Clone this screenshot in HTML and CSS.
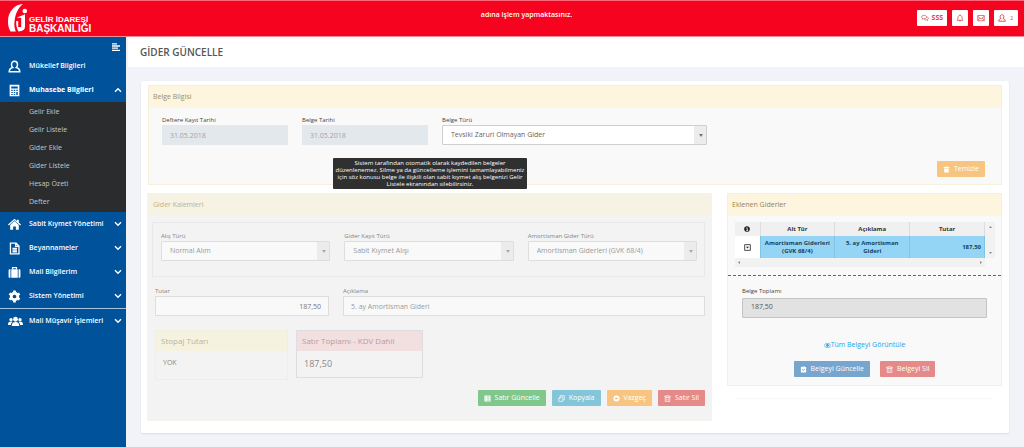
FILE: index.html
```html
<!DOCTYPE html>
<html lang="tr">
<head>
<meta charset="utf-8">
<title>Gider Güncelle</title>
<link rel="stylesheet" href="styles.css">
</head>
<body>
<svg class="defs" aria-hidden="true">
  <symbol id="user" viewBox="0 0 16 16"><path d="M8 1.500c2.300 0 3.700 1.700 3.700 4 0 1.600-.7 3-1.500 3.700 2.800.6 4.300 1.800 4.300 5.300h-13c0-3.500 1.500-4.700 4.300-5.300C5 8.500 4.300 7.100 4.300 5.500c0-2.300 1.400-4 3.700-4z" fill="none" stroke="currentColor" stroke-width="1.800"/></symbol>
  <symbol id="down" viewBox="0 0 8 6"><path d="M1 1.200l3 3 3-3" fill="none" stroke="currentColor" stroke-width="1.400"/></symbol>
  <symbol id="trash" viewBox="0 0 16 16"><path d="M1.500 4.500V2.500h4L6.500 1h3l1 1.500h4v2zM2.800 5.500h10.400V15H2.800zM6.300 8v5M9.700 8v5" fill="none" stroke="currentColor" stroke-width="1.500"/></symbol>
  <symbol id="trashfull" viewBox="0 0 16 16"><path d="M1.500 4.500v-2h4L6 1h4l.5 1.500h4v2zM2.500 5.500h11L13 15H3z" fill="currentColor"/></symbol>
</svg>
<header class="top">
  <a class="brand" href="#">
    <svg class="mark" viewBox="0 0 20 28"><path d="M15 0C6 .5 0 8 0 17.500c0 4 .8 7.300 2.500 10h5.300C6.300 24 6 20.500 6.600 16.500 7.500 9.500 10 4 15 0z" fill="#fff"/><path d="M9 13.500l8-3.200v12.200c0 3-2 4.800-6.500 5-1.700-2.800-2.500-6.500-2.300-10.500h2v6h3v-9.300H9z" fill="#fff"/><circle cx="16.800" cy="7" r="2.300" fill="#fff"/></svg>
    <span class="brand-name"><span>GELİR İDARESİ</span><span class="wide">BAŞKANLIĞI</span></span>
  </a>
  <p class="notice">adına işlem yapmaktasınız.</p>
  <nav class="tools" aria-label="Hesap">
    <button type="button"><svg class="ic8" viewBox="0 0 18 16"><path d="M7 2C3.700 2 1.500 3.600 1.500 5.800c0 1.300.8 2.400 2 3.100L2.800 11l2.700-1.300c4 .5 7-1.200 7-3.900C12.500 3.600 10.300 2 7 2zM14 5.500c1.700.6 2.600 1.700 2.600 3 0 1.200-.7 2.200-1.900 2.900l.7 2.100-2.600-1.300c-2.300.3-4.300-.2-5.500-1.500" fill="none" stroke="currentColor" stroke-width="1.500"/></svg><b>SSS</b></button>
    <button type="button" aria-label="Bildirimler"><svg class="ic8" viewBox="0 0 16 16"><path d="M8 1v1.500M2 12.500c1.800-1.600 2-3.500 2-5.500 0-2.700 1.700-4.300 4-4.300S12 4.300 12 7c0 2 .2 3.900 2 5.500zM6.500 13c0 2.200 3 2.200 3 0" fill="none" stroke="currentColor" stroke-width="1.500"/></svg></button>
    <button type="button" aria-label="Mesajlar"><svg class="ic8" viewBox="0 0 16 16"><path d="M1.500 3h13v10.500h-13zM1.500 5L8 9.500 14.500 5M1.500 12.500l4.500-4M14.500 12.500L10 8.500" fill="none" stroke="currentColor" stroke-width="1.400"/></svg></button>
    <button type="button"><svg class="ic8"><use href="#user"/></svg><span class="count">2</span></button>
  </nav>
</header>
<div class="shell">
  <aside class="side">
    <button class="toggle" type="button" aria-label="Menü"><svg viewBox="0 0 8 8"><path d="M0 .8h5M0 3h8M0 5.200h6M0 7.300h8" stroke="#fff" stroke-width="1.300"/></svg></button>
    <nav aria-label="Menü">
      <a class="item" href="#"><svg class="ic"><use href="#user"/></svg><span>Mükellef Bilgileri</span></a>
      <a class="item open" href="#"><svg class="ic" viewBox="0 0 16 16"><path fill-rule="evenodd" d="M2 1h12v14H2zM4 3v2.500h8V3zM4 7v1.700h1.800V7zM7.100 7v1.700h1.800V7zM10.200 7v1.700H12V7zM4 9.800v1.400h1.800V9.800zM7.100 9.800v1.400h1.800V9.800zM4 12.200v1.400h1.800v-1.400zM7.100 12.200v1.400h1.800v-1.400zM10.200 9.800v3.800H12V9.800z" fill="currentColor"/></svg><span>Muhasebe Bilgileri</span><svg class="chev up"><use href="#down"/></svg></a>
      <div class="sub">
        <a href="#">Gelir Ekle</a><a href="#">Gelir Listele</a><a href="#">Gider Ekle</a><a href="#">Gider Listele</a><a href="#">Hesap Özeti</a><a href="#">Defter</a>
      </div>
      <a class="item" href="#"><svg class="ic" viewBox="0 0 16 16"><path d="M8 3.800l5.300 4.800V14.500H9.700v-4H6.300v4H2.700V8.600zM0 8l8-7 3 2.600V2h2.300v3.600L16 8l-1 1.100-7-6.200-7 6.200z" fill="currentColor"/></svg><span>Sabit Kıymet Yönetimi</span><svg class="chev"><use href="#down"/></svg></a>
      <a class="item" href="#"><svg class="ic" viewBox="0 0 16 16"><path d="M3 1.500h7l3.500 3.500v9.500H3zM9.500 1.500V5.500h4M5.500 8h5.500M5.500 10h5.500M5.500 12h5.500" fill="none" stroke="currentColor" stroke-width="1.600"/></svg><span>Beyannameler</span><svg class="chev"><use href="#down"/></svg></a>
      <a class="item" href="#"><svg class="ic" viewBox="0 0 16 16"><path d="M5.500 4V2h5v2" fill="none" stroke="currentColor" stroke-width="1.400"/><path d="M4 4h8v10.500H4zM3 4v10.500H2.200C1.300 14.500.7 14 .7 13V5.500C.7 4.500 1.300 4 2.200 4zM13 4v10.500h.8c.9 0 1.500-.5 1.500-1.500V5.500c0-1-.6-1.500-1.500-1.500z" fill="currentColor"/></svg><span>Mali Bilgilerim</span><svg class="chev"><use href="#down"/></svg></a>
      <a class="item" href="#"><svg class="ic" viewBox="0 0 16 16"><circle cx="8" cy="8" r="4" fill="none" stroke="currentColor" stroke-width="3.400"/><path d="M8 .7v3M8 12.300v3M1.700 4.400l2.600 1.500M11.700 10.100l2.600 1.500M1.700 11.600l2.600-1.500M11.700 5.900l2.600-1.500" stroke="currentColor" stroke-width="3.400"/></svg><span>Sistem Yönetimi</span><svg class="chev"><use href="#down"/></svg></a>
      <a class="item ruled" href="#"><svg class="ic wide-ic" viewBox="0 0 20 14"><circle cx="10" cy="4" r="3.200"/><circle cx="4" cy="4.500" r="2.200"/><circle cx="16" cy="4.500" r="2.200"/><path d="M5 13c0-4 1.500-5.500 5-5.500s5 1.500 5 5.500zM0 11.500c0-3 .8-4.500 4.500-4.500L6 7.500C4.300 8.500 4 10 4 11.500zM20 11.500c0-3-.8-4.500-4.500-4.500L14 7.500c1.700 1 2 2.500 2 4z"/></svg><span>Mali Müşavir İşlemleri</span><svg class="chev"><use href="#down"/></svg></a>
    </nav>
  </aside>
  <main class="main">
    <h1>GİDER GÜNCELLE</h1>
    <div class="page">
      <section class="panel doc">
        <h2>Belge Bilgisi</h2>
        <div class="doc-body">
          <div class="doc-fields">
            <div class="field"><label for="kayit">Deftere Kayıt Tarihi</label><input id="kayit" class="date" type="text" value="31.05.2018" disabled></div>
            <div class="field"><label for="tarih">Belge Tarihi</label><input id="tarih" class="date" type="text" value="31.05.2018" disabled></div>
            <div class="field"><label for="tur">Belge Türü</label><div class="pick"><select id="tur"><option>Tevsiki Zaruri Olmayan Gider</option></select></div></div>
          </div>
          <div class="doc-actions"><button class="btn orange" type="button"><svg><use href="#trashfull"/></svg>Temizle</button></div>
        </div>
        <div class="tip" role="tooltip">Sistem tarafından otomatik olarak kaydedilen belgeler<br>düzenlenemez. Silme ya da güncelleme işlemini tamamlayabilmeniz<br>için söz konusu belge ile ilişkili olan sabit kıymet alış belgenizi Gelir<br>Listele ekranından silebilirsiniz.</div>
      </section>
      <div class="cols">
        <section class="lines">
          <h2>Gider Kalemleri</h2>
          <div class="lines-body">
            <div class="kinds">
              <div class="field"><label for="alis">Alış Türü</label><div class="pick"><select id="alis" disabled><option>Normal Alım</option></select></div></div>
              <div class="field"><label for="gkt">Gider Kayıt Türü</label><div class="pick"><select id="gkt" disabled><option>Sabit Kıymet Alışı</option></select></div></div>
              <div class="field"><label for="agt">Amortisman Gider Türü</label><div class="pick"><select id="agt" disabled><option>Amortisman Giderleri (GVK 68/4)</option></select></div></div>
            </div>
            <div class="amounts">
              <div class="field"><label for="tutar">Tutar</label><input id="tutar" class="text num" type="text" value="187,50" readonly></div>
              <div class="field"><label for="acik">Açıklama</label><input id="acik" class="text" type="text" value="5. ay Amortisman Gideri" readonly></div>
            </div>
            <div class="cards">
              <div class="card yellow"><h3>Stopaj Tutarı</h3><p>YOK</p></div>
              <div class="card red"><h3>Satır Toplamı - KDV Dahil</h3><p>187,50</p></div>
            </div>
            <div class="actions">
              <button class="btn green" type="button"><svg viewBox="0 0 16 16"><path fill-rule="evenodd" d="M1 1h14v14H1zM3 3.500V5h2V3.500zM6.500 3.500V5H13V3.500zM3 7.200v1.600h2V7.200zM6.500 7.200v1.600H13V7.200zM3 11v1.500h2V11zM6.500 11v1.500H13V11z" fill="currentColor"/></svg>Satır Güncelle</button>
              <button class="btn cyan" type="button"><svg viewBox="0 0 16 16"><path d="M5 4.500V1.500h9.500v9.500H11M1.500 8L5 4.500h6v10H1.500zM5 4.500V8H1.500" fill="none" stroke="currentColor" stroke-width="1.500"/></svg>Kopyala</button>
              <button class="btn orange" type="button"><svg viewBox="0 0 16 16"><path fill-rule="evenodd" d="M8 1a7 7 0 1 1 0 14A7 7 0 0 1 8 1zM8 4L4 8l4 4V9.200h4V6.800H8z" fill="currentColor"/></svg>Vazgeç</button>
              <button class="btn rose" type="button"><svg><use href="#trash"/></svg>Satır Sil</button>
            </div>
          </div>
        </section>
        <div class="right">
          <section class="panel added">
            <h2>Eklenen Giderler</h2>
            <div class="grid">
              <table>
                <thead><tr><th class="c0"><svg class="info" viewBox="0 0 16 16"><circle cx="8" cy="8" r="7.500" fill="#222"/><path d="M6 7h3v5M6 12.200h5M7 4h2" stroke="#fff" stroke-width="2" fill="none"/></svg></th><th>Alt Tür</th><th>Açıklama</th><th>Tutar</th></tr></thead>
                <tbody><tr><td class="c0"><button class="expand" type="button" aria-label="Aç"><svg viewBox="0 0 16 16"><path d="M1.500 1.500h13v13h-13z" fill="none" stroke="#333" stroke-width="2"/><path d="M4.500 6.500h7L8 10.500z" fill="#222"/></svg></button></td><td>Amortisman Giderleri<br>(GVK 68/4)</td><td>5. ay Amortisman<br>Gideri</td><td class="sum">187,50</td></tr></tbody>
              </table>
              <div class="vbar"><svg viewBox="0 0 6 4"><path d="M0 4l3-4 3 4z"/></svg><svg viewBox="0 0 6 4"><path d="M0 0l3 4 3-4z"/></svg></div>
              <div class="hbar"><svg viewBox="0 0 4 6"><path d="M4 0L0 3l4 3z"/></svg><svg viewBox="0 0 4 6"><path d="M0 0l4 3-4 3z"/></svg></div>
            </div>
            <div class="total">
              <div class="field"><label for="toplam">Belge Toplamı</label><input id="toplam" class="sumbox" type="text" value="187,50" disabled></div>
              <a class="view" href="#"><svg viewBox="0 0 16 10"><path d="M0 5c4-6.500 12-6.500 16 0-4 6.500-12 6.500-16 0z" fill="none" stroke="currentColor" stroke-width="1.600"/><circle cx="8" cy="4.800" r="3.200" fill="currentColor"/></svg>Tüm Belgeyi Görüntüle</a>
              <div class="doc-buttons">
                <button class="btn blue" type="button"><svg viewBox="0 0 16 16"><path fill-rule="evenodd" d="M2 2.500h3.500V1h5v1.500H14V15H2zM4.500 8.500l3 3.200 4.500-4.500-1.100-1.200-3.400 3.400-1.900-2z" fill="currentColor"/></svg>Belgeyi Güncelle</button>
                <button class="btn rose" type="button"><svg><use href="#trash"/></svg>Belgeyi Sil</button>
              </div>
            </div>
          </section>
          <hr>
        </div>
      </div>
    </div>
  </main>
</div>
</body>
</html>
```
FILE: styles.css
```css
* { box-sizing: border-box; }
body { margin: 0; min-height: 100vh; display: flex; flex-direction: column; background: #f1f3f8; color: #666; font: 7px/10px "Open Sans", "Noto Sans", sans-serif; }
h1, h2, h3, p { margin: 0; font-weight: 400; }
a { color: inherit; text-decoration: none; }
button, input, select { font: inherit; color: inherit; margin: 0; }
svg { display: block; flex: none; }
.defs { position: absolute; width: 0; height: 0; }

.top { display: grid; grid-template-columns: 1fr auto 1fr; height: 37px; padding: 0 6px 0 8px; background: #f60320; border-top: 1px solid #fb6678; color: #fff; border-bottom: 1px solid #f98c98; }
.brand { display: flex; gap: 1px; padding-top: 3px; }
.mark { width: 20px; height: 28px; }
.brand-name { display: flex; flex-direction: column; padding-top: 11px; font: bold 8px/9px "Liberation Sans", sans-serif; }
.wide { font-size: 10px; }
.notice { padding: 9px 0 0 27px; font-weight: 600; }
.tools { display: flex; justify-content: flex-end; align-items: flex-start; gap: 5px; padding-top: 9px; }
.tools button { display: flex; align-items: center; gap: 3px; height: 16px; padding: 0 4px; border: 0; border-radius: 1px; background: #fff; color: #d8434a; }
.ic8 { width: 8px; height: 8px; }
.count { font-size: 5px; padding: 0 1px; }

.shell { flex: 1; display: flex; }
.side { width: 126px; flex: none; background: #00529b; color: #fff; }
.toggle { display: block; margin: 0 0 0 auto; padding: 6px 6px 3px; border: 0; background: none; height: 17px; }
.toggle svg { width: 8px; height: 8px; }
.item { display: flex; align-items: center; height: 24px; padding: 0 4px 0 8px; font-weight: 600; }
.item span { flex: 1; padding-left: 8px; white-space: nowrap; }
.open { font-weight: 700; }
.ic { width: 13px; height: 13px; fill: currentColor; }
.wide-ic { width: 15px; margin-right: -2px; }
.chev { width: 8px; height: 6px; }
.up { transform: rotate(180deg); }
.sub { padding: 1px 0; background: #2a2c2e; color: #c4c8cb; }
.sub a { display: block; padding-left: 29px; line-height: 18px; }
.ruled { border-top: 1px solid #a9c4de; height: 25px; }

.main { flex: 1; min-width: 0; border-left: 2px solid #f1f3f8; }
h1 { height: 30px; padding: 0 12px; background: #fff; color: #555; font-size: 10px; font-weight: 600; line-height: 31px; }
.page { margin: 14px 15px 12px 13px; padding: 4px 7px 12px; background: #fff; border-radius: 2px; box-shadow: 0 1px 2px #d9dce2; }
.panel { position: relative; background: #f9f9f9; border: 1px solid #f6efdc; }
h2 { height: 22px; padding-left: 4px; background: #fdf5de; color: #a08d62; font-size: 7px; line-height: 22px; }
.field { display: flex; flex-direction: column; min-width: 0; }
.field label { font-size: 6px; line-height: 8px; color: #444; margin-bottom: 1px; }
.doc-body { padding: 8px 16px 7px 13px; }
.doc-fields { display: grid; grid-template-columns: 126fr 126fr 265fr 264fr; gap: 14px; }
.date, .text, .sumbox { width: 100%; height: 20px; padding: 0 7px; border: 1px solid #d2d2d2; background: #fff; }
.date { border-color: #e3e8ed; background: #e3e8ed; color: #a0a4a8; }
.pick { position: relative; }
.pick::before { content: ""; position: absolute; top: 1px; right: 1px; bottom: 1px; width: 12px; background: #ececec; pointer-events: none; }
.pick::after { content: ""; position: absolute; top: 9px; right: 4px; border: 2px solid transparent; border-top: 3px solid #777; pointer-events: none; }
select { display: block; appearance: none; width: 100%; height: 20px; padding: 0 14px 0 8px; border: 1px solid #cfcfcf; border-radius: 1px; background: #fff; opacity: 1; }
.doc-actions { display: flex; justify-content: flex-end; padding-top: 16px; }
.btn { display: flex; align-items: center; gap: 4px; height: 16px; padding: 0 6px; border: 0; border-radius: 1px; color: #fff; white-space: nowrap; }
.btn svg { width: 7px; height: 7px; }
.orange { background: #f8c580; }
.green { background: #81c78c; }
.cyan { background: #83c6d9; }
.rose { background: #e58989; }
.blue { background: #77a5cd; }
.tip { position: absolute; z-index: 2; top: 72px; left: 184px; width: 194px; padding: 2px 0 1px; background: #303030; border-radius: 1px; color: #fff; font-size: 6px; line-height: 7px; text-align: center; white-space: nowrap; }

.cols { display: grid; grid-template-columns: 565fr 275fr; gap: 15px; align-items: start; margin: 8px 0 0 -1px; }
.lines { background: #f3f3f3; border: 1px solid #f5f3ea; color: #999; }
.lines h2 { background: #f6f2e4; color: #bcb292; padding-left: 5px; }
.lines .field label { color: #848484; }
.lines-body { padding: 6px 6px 14px 4px; }
.kinds { display: grid; grid-template-columns: repeat(3, 1fr); gap: 14px; padding: 9px 7px 15px 8px; border: 1px solid #e8e8e8; }
.lines select, .lines .text { background: #f9f9f9; border-color: #dedede; }
.lines .pick::after { border-top-color: #aaa; }
.amounts { display: grid; grid-template-columns: 174fr 362fr; gap: 14px; padding: 10px 0 0 3px; }
.lines .num { text-align: right; color: #777; }
.cards { display: grid; grid-template-columns: 133px 127px; gap: 8px; align-items: start; padding: 14px 0 0 3px; }
.card { border: 1px solid #f1efe2; color: #888; }
.card h3 { padding: 0 5px; font-size: 8px; line-height: 20px; }
.card p { padding: 0 7px; }
.yellow h3 { background: #f5f2df; color: #b9b397; }
.yellow p { height: 28px; line-height: 24px; }
.red { border-color: #dedede; }
.red h3 { background: #f2dfdf; color: #c19a9a; }
.red p { font-size: 9px; line-height: 26px; }
.actions { display: flex; justify-content: flex-end; gap: 6px; padding-top: 10px; }

.added h2 { color: #95845a; }
.grid { display: grid; grid-template-columns: 1fr 10px; margin: 6px 6px 0 7px; font-weight: 700; color: #333; }
table { width: 100%; border-collapse: collapse; table-layout: fixed; font-size: 6px; line-height: 8px; }
th, td { height: 14px; padding: 0 3px; border-right: 1px solid #ddd; text-align: center; background: #f0f0f0; font-weight: 700; }
td { height: 22px; background: #94d4f4; border-color: #82c4e6; color: #17435c; }
.c0 { width: 25px; }
td.c0 { background: #fff; }
.info { width: 6px; height: 6px; margin: auto; }
.expand { display: block; margin: auto; padding: 0; border: 0; background: none; }
.expand svg { width: 7px; height: 7px; }
td.sum { text-align: right; }
.vbar, .hbar { display: flex; justify-content: space-between; align-items: center; background: #f2f2f2; fill: #888; }
.vbar { flex-direction: column; padding: 4px 0; }
.vbar svg { width: 3px; height: 2px; }
.hbar { height: 9px; padding: 0 3px; }
.hbar svg { width: 2px; height: 3px; }
.total { margin-top: 8px; padding: 11px 14px 8px; border-top: 1px dashed #666; }
.total .field { gap: 2px; }
.sumbox { border-color: #c4c4c4; border-radius: 1px; background: #e2e2e2; color: #555; padding: 0 8px 3px; }
.view { display: flex; justify-content: center; align-items: center; margin-top: 22px; color: #23a5e6; }
.view svg { width: 7px; height: 5px; }
.doc-buttons { display: flex; justify-content: center; gap: 10px; margin-top: 11px; }
hr { margin: 12px 10px 0; border: 0; border-top: 1px solid #f7f7f7; }
```
